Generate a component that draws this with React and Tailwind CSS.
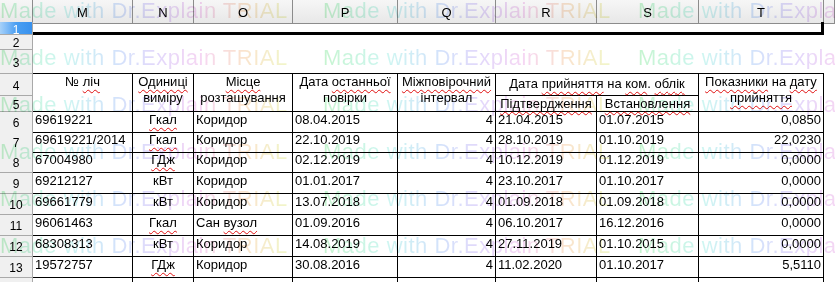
import React from "react";

// column template shared by all bands of the sheet
const cols = "grid-cols-[33px_100px_61px_99px_105px_98px_101px_102px_125px_1fr]";

const letters = ["M", "N", "O", "P", "Q", "R", "S", "T", ""];

const rows = [
  { n: 6, h: "h-[20px]", c: ["69619221", "Гкал", "Коридор", "08.04.2015", "4", "21.04.2015", "01.07.2015", "0,0850"] },
  { n: 7, h: "h-[20px]", c: ["69619221/2014", "Гкал", "Коридор", "22.10.2019", "4", "28.10.2019", "01.10.2019", "22,0230"] },
  { n: 8, h: "h-[21px]", c: ["67004980", "ГДж", "Коридор", "02.12.2019", "4", "10.12.2019", "01.12.2019", "0,0000"] },
  { n: 9, h: "h-[21px]", c: ["69212127", "кВт", "Коридор", "01.01.2017", "4", "23.10.2017", "01.10.2017", "0,0000"] },
  { n: 10, h: "h-[21px]", c: ["69661779", "кВт", "Коридор", "13.07.2018", "4", "01.09.2018", "01.09.2018", "0,0000"] },
  { n: 11, h: "h-[21px]", c: ["96061463", "Гкал", "Сан вузол", "01.09.2016", "4", "06.10.2017", "16.12.2016", "0,0000"] },
  { n: 12, h: "h-[21px]", c: ["68308313", "кВт", "Коридор", "14.08.2019", "4", "27.11.2019", "01.10.2015", "0,0000"] },
  { n: 13, h: "h-[21px]", c: ["19572757", "ГДж", "Коридор", "30.08.2016", "4", "11.02.2020", "01.10.2017", "5,5110"] },
];

const align = ["text-left", "text-center", "text-left", "text-left", "text-right", "text-left", "text-left", "text-right"];

const misspelled = ["Гкал", "ГДж", "вузол"];

const markTops = ["top-0", "top-[47px]", "top-[94px]", "top-[141px]", "top-[188px]", "top-[235px]"];
const markLefts = ["left-0", "left-[323px]", "left-[638px]"];

// red spell-check squiggle
function Sq({ children }) {
  return (
    <span className="underline decoration-wavy decoration-[#e01010] decoration-1 underline-offset-[3px]">
      {children}
    </span>
  );
}

function renderText(text) {
  // wrap misspelled words
  return text.split(" ").map((w, i) => (
    <React.Fragment key={i}>
      {i > 0 && " "}
      {misspelled.includes(w) ? <Sq>{w}</Sq> : w}
    </React.Fragment>
  ));
}

function RowHead({ n, className = "" }) {
  return (
    <div className={`flex items-center justify-center border-r border-b border-[#a9a9a9] bg-[#f0f0f0] pt-[2px] text-[12px] text-black ${className}`}>
      {n}
    </div>
  );
}

function HeadCell({ className = "", children }) {
  return (
    <div className={`border-r border-b border-black px-[2px] text-center text-[13px] leading-4 ${className}`}>
      {children}
    </div>
  );
}

export default function App() {
  return (
    <div className="relative h-[282px] w-[835px] overflow-hidden bg-white font-['Liberation_Sans',Arial,sans-serif] text-black">
      {/* column letters */}
      <div className={`grid ${cols} h-[22px]`}>
        <div className="border-r border-b border-[#8c8c8c] bg-linear-to-b from-[#f6f6f6] to-[#e8e8e8]" />
        {letters.map((l, i) => (
          <div
            key={i}
            className="flex items-center justify-center border-r border-b border-[#8c8c8c] bg-linear-to-b from-[#f6f6f6] to-[#e8e8e8] pt-[3px] text-[13px]"
          >
            {l}
          </div>
        ))}
      </div>

      {/* rows 1-5: title area and table header */}
      <div className={`grid ${cols} grid-rows-[13px_15px_24px_22px_16px]`}>
        <div className="col-start-1 row-start-1 flex items-center justify-center border-r border-b border-[#a9a9a9] bg-linear-to-r from-[#a6d1f9] via-[#4a9ff2] to-[#3891ee] pt-[3px] text-[12px] text-white">
          1
        </div>
        <RowHead n={2} className="col-start-1 row-start-2" />
        <RowHead n={3} className="col-start-1 row-start-3" />
        <RowHead n={4} className="col-start-1 row-start-4" />
        <RowHead n={5} className="col-start-1 row-start-5" />

        <div className="col-start-2 col-span-8 row-start-1 border-b-[3px] border-r-[3px] border-black" />
        <div className="col-start-2 col-span-8 row-start-2 row-span-2 border-b border-black" />

        <HeadCell className="col-start-2 row-start-4 row-span-2">
          № <Sq>ліч</Sq>
        </HeadCell>
        <HeadCell className="col-start-3 row-start-4 row-span-2">
          <Sq>Одиниці</Sq>
          <br />
          виміру
        </HeadCell>
        <HeadCell className="col-start-4 row-start-4 row-span-2">
          <Sq>Місце</Sq>
          <br />
          розташування
        </HeadCell>
        <HeadCell className="col-start-5 row-start-4 row-span-2">
          Дата <Sq>останньої</Sq>
          <br />
          повірки
        </HeadCell>
        <HeadCell className="col-start-6 row-start-4 row-span-2 whitespace-nowrap">
          <Sq>Міжповірочний</Sq>
          <br />
          інтервал
        </HeadCell>
        <HeadCell className="col-start-7 col-span-2 row-start-4 pt-[2px]">
          Дата <Sq>прийняття</Sq> на <Sq>ком</Sq>. <Sq>облік</Sq>
        </HeadCell>
        <HeadCell className="col-start-7 row-start-5">
          <Sq>Підтвердження</Sq>
        </HeadCell>
        <HeadCell className="col-start-8 row-start-5">
          <Sq>Встановлення</Sq>
        </HeadCell>
        <HeadCell className="col-start-9 row-start-4 row-span-2">
          <Sq>Показники</Sq> на <Sq>дату</Sq>
          <br />
          <Sq>прийняття</Sq>
        </HeadCell>
      </div>

      {/* data rows */}
      {rows.map((r) => (
        <div key={r.n} className={`grid ${cols} ${r.h}`}>
          <RowHead n={r.n} />
          {r.c.map((v, i) => (
            <div
              key={i}
              className={`overflow-hidden whitespace-nowrap border-r border-b border-black px-[2px] text-[13px] leading-4 ${align[i]}`}
            >
              {renderText(v)}
            </div>
          ))}
          <div />
        </div>
      ))}

      {/* row 14, cut off by the window */}
      <div className={`grid ${cols} h-[20px]`}>
        <div className="border-r border-[#a9a9a9] bg-[#f0f0f0]" />
        {align.map((_, i) => (
          <div key={i} className="border-r border-black" />
        ))}
        <div />
      </div>

      {/* trial watermark laid over the sheet */}
      <div className="pointer-events-none absolute inset-0 opacity-80 mix-blend-multiply">
        {markTops.map((t) =>
          markLefts.map((l) => (
            <span
              key={t + l}
              className={`absolute ${t} ${l} whitespace-nowrap bg-[linear-gradient(90deg,#b8f2c4_0%,#c2f4ee_22%,#c8dcfa_40%,#dccefa_55%,#f4ccf0_70%,#f9dcc2_84%,#eef4bc_100%)] bg-clip-text text-[22px] leading-[22px] tracking-[0.5px] text-transparent`}
            >
              Made with Dr.Explain TRIAL
            </span>
          ))
        )}
      </div>
    </div>
  );
}
